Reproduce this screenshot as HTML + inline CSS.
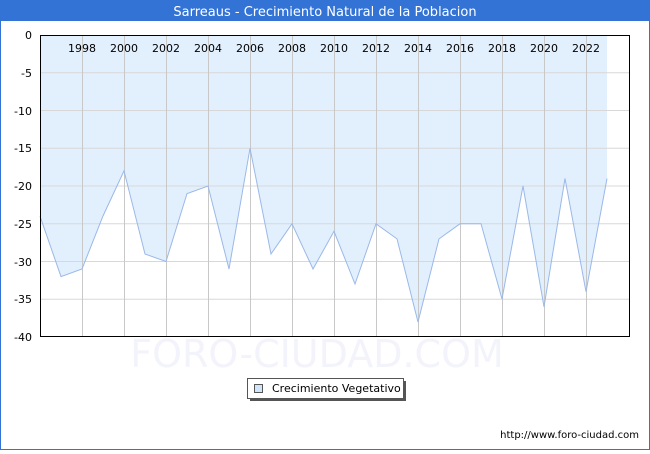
<!DOCTYPE html>
<html><head><style>
body{margin:0;width:650px;height:450px;overflow:hidden;font-family:"DejaVu Sans","Liberation Sans",sans-serif;}
</style></head><body>
<svg width="650" height="450" xmlns="http://www.w3.org/2000/svg" font-family="DejaVu Sans, Liberation Sans, sans-serif">
<rect x="0" y="0" width="650" height="450" fill="#fff"/>
<rect x="0.5" y="0.5" width="649" height="449" fill="none" stroke="#3373d6"/>
<rect x="0" y="0" width="650" height="21" fill="#3373d6"/>
<text x="325" y="16" fill="#fff" font-size="13" text-anchor="middle">Sarreaus - Crecimiento Natural de la Poblacion</text>
<text x="317" y="367" fill="#f3f3fb" font-size="38" text-anchor="middle">FORO-CIUDAD.COM</text>
<polygon fill="#e2f0fe" points="40,35 40,216.2 61,276.6 82,269 103,216 124,170.9 145,254 166,261.5 187,193.6 208,186 229,269 250,148.3 271,254 292,223.8 313,269 334,231.3 355,284 376,223.8 397,238.9 418,322 439,238.9 460,223.8 481,223.8 502,299 523,186 544,306.8 565,178.5 586,291.7 607,178.5 607,35"/>
<g stroke="#d8d8d8" stroke-width="1">
<line x1="40" y1="72.75" x2="630" y2="72.75"/><line x1="40" y1="110.5" x2="630" y2="110.5"/><line x1="40" y1="148.25" x2="630" y2="148.25"/><line x1="40" y1="186" x2="630" y2="186"/><line x1="40" y1="223.75" x2="630" y2="223.75"/><line x1="40" y1="261.5" x2="630" y2="261.5"/><line x1="40" y1="299.25" x2="630" y2="299.25"/>
</g>
<g stroke="#c8c8c8" stroke-width="1">
<line x1="82.5" y1="35" x2="82.5" y2="337"/><line x1="124.5" y1="35" x2="124.5" y2="337"/><line x1="166.5" y1="35" x2="166.5" y2="337"/><line x1="208.5" y1="35" x2="208.5" y2="337"/><line x1="250.5" y1="35" x2="250.5" y2="337"/><line x1="292.5" y1="35" x2="292.5" y2="337"/><line x1="334.5" y1="35" x2="334.5" y2="337"/><line x1="376.5" y1="35" x2="376.5" y2="337"/><line x1="418.5" y1="35" x2="418.5" y2="337"/><line x1="460.5" y1="35" x2="460.5" y2="337"/><line x1="502.5" y1="35" x2="502.5" y2="337"/><line x1="544.5" y1="35" x2="544.5" y2="337"/><line x1="586.5" y1="35" x2="586.5" y2="337"/>
</g>
<polyline fill="none" stroke="#9bb8e8" stroke-width="1" points="40,216.2 61,276.6 82,269 103,216 124,170.9 145,254 166,261.5 187,193.6 208,186 229,269 250,148.3 271,254 292,223.8 313,269 334,231.3 355,284 376,223.8 397,238.9 418,322 439,238.9 460,223.8 481,223.8 502,299 523,186 544,306.8 565,178.5 586,291.7 607,178.5"/>
<rect x="40.5" y="35.5" width="589" height="301" fill="none" stroke="#000"/>
<g font-size="11" fill="#000" text-anchor="middle">
<text x="82" y="52">1998</text><text x="124" y="52">2000</text><text x="166" y="52">2002</text><text x="208" y="52">2004</text><text x="250" y="52">2006</text><text x="292" y="52">2008</text><text x="334" y="52">2010</text><text x="376" y="52">2012</text><text x="418" y="52">2014</text><text x="460" y="52">2016</text><text x="502" y="52">2018</text><text x="544" y="52">2020</text><text x="586" y="52">2022</text>
</g>
<g font-size="11" fill="#000" text-anchor="end">
<text x="32" y="39">0</text><text x="32" y="77">-5</text><text x="32" y="115">-10</text><text x="32" y="152">-15</text><text x="32" y="190">-20</text><text x="32" y="228">-25</text><text x="32" y="266">-30</text><text x="32" y="303">-35</text><text x="32" y="341">-40</text>
</g>
<rect x="250" y="381" width="156" height="20" fill="#555"/>
<rect x="247.5" y="378.5" width="156" height="20" fill="#fff" stroke="#555"/>
<rect x="254.5" y="384.5" width="8" height="8" fill="#cfe5fb" stroke="#555"/>
<text x="272" y="392" font-size="11" fill="#000">Crecimiento Vegetativo</text>
<text x="639" y="438" font-size="10" fill="#000" text-anchor="end">http://www.foro-ciudad.com</text>
</svg>
</body></html>
